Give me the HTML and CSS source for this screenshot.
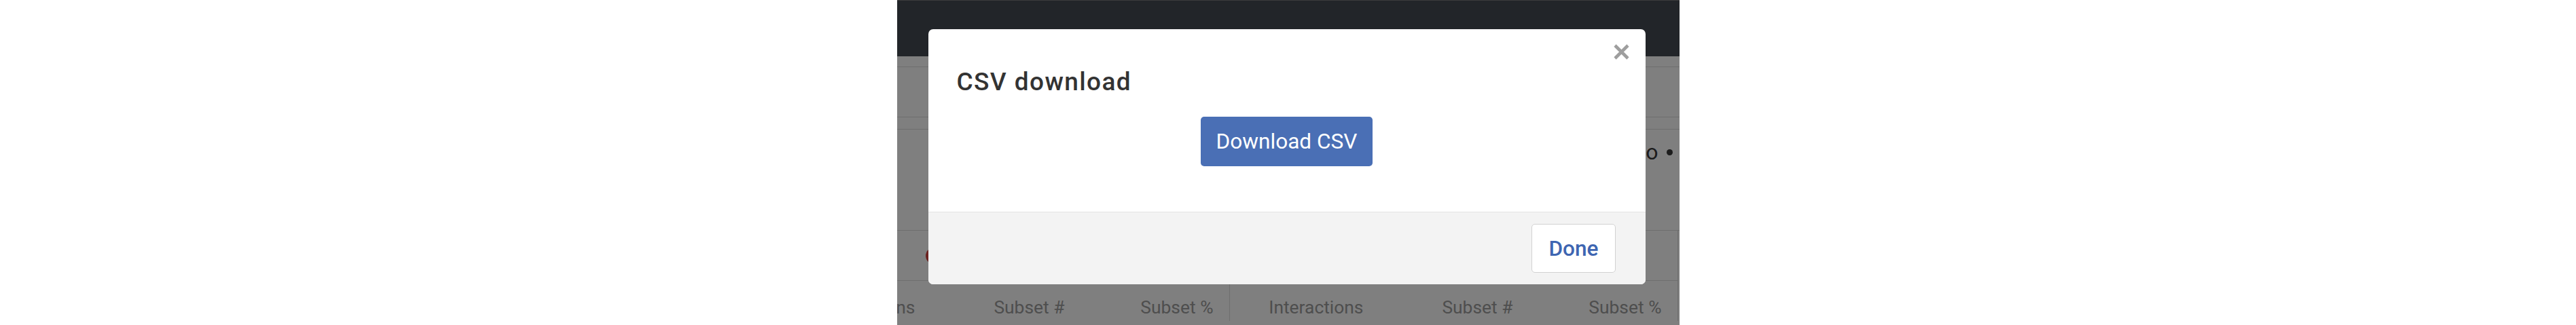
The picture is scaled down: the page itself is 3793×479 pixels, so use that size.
FILE: index.html
```html
<!DOCTYPE html>
<html lang="en">
<head>
    <meta charset="UTF-8">
    <meta name="viewport" content="width=device-width, initial-scale=1.0">
    <title>CSV download</title>
    <link rel="stylesheet" href="styles.css">
</head>
<body>

<div class="frame">
    <!-- Page behind the dialog -->
    <div class="page">
        <nav class="navbar"></nav>
        <div class="strip"></div>
        <div class="toolbar"></div>
        <div class="strip thin"></div>
        <div class="summary">
            <span class="legend">Demo</span>
            <span class="legend-dot"></span>
        </div>
        <div class="tables">
            <div class="group">
                <div class="group-head"><span class="badge"></span></div>
                <div class="cols">
                    <span>Interactions</span>
                    <span>Subset #</span>
                    <span>Subset %</span>
                </div>
            </div>
            <div class="group">
                <div class="group-head"></div>
                <div class="cols">
                    <span>Interactions</span>
                    <span>Subset #</span>
                    <span>Subset %</span>
                </div>
            </div>
        </div>
    </div>

    <div class="backdrop"></div>

    <!-- Dialog -->
    <div class="modal-wrap">
        <div class="modal">
            <button class="close" aria-label="Close">
                <svg width="23" height="23" viewBox="0 0 23 23">
                    <path d="M2 2 L21 21 M21 2 L2 21" stroke="#9e9e9e" stroke-width="4.6" fill="none"/>
                </svg>
            </button>
            <h4 class="modal-title">CSV download</h4>
            <div class="modal-body">
                <button class="btn btn-primary">Download CSV</button>
            </div>
            <div class="modal-footer">
                <button class="btn btn-default">Done</button>
            </div>
        </div>
    </div>
</div>

</body>
</html>
```

FILE: styles.css
```css
body {
    margin: 0;
    padding: 0;
    background-color: #fff;
    font-family: Roboto, "Noto Sans", sans-serif;
}
.frame {
    position: relative;
    width: 1152px;
    height: 479px;
    margin: 0 auto;
    overflow: hidden;
}
.page {
    background-color: #fff;
    height: 100%;
}
.navbar {
    height: 82px;
    border-top: 1px solid #787878;
    background-color: #444a53;
}
.strip {
    height: 15px;
    border-bottom: 1px solid #dddddd;
}
.toolbar {
    height: 73px;
    border-bottom: 1px solid #dddddd;
}
.strip.thin {
    height: 17px;
}
.summary {
    height: 134px;
    padding-top: 14px;
    padding-right: 10px;
    border-bottom: 1px solid #dddddd;
    display: flex;
    justify-content: flex-end;
    align-items: flex-start;
}
.legend {
    font-size: 32px;
    line-height: 38px;
    color: #383838;
    white-space: nowrap;
}
.legend-dot {
    width: 9px;
    height: 9px;
    margin: 15px 0 0 12px;
    border-radius: 50%;
    background-color: #383838;
}
.tables {
    display: flex;
    justify-content: flex-end;
    overflow: hidden;
    padding-right: 2px;
}
.group {
    flex-shrink: 0;
    width: 659px;
    border-right: 1px solid #dddddd;
}
.group-head {
    height: 73px;
    border-bottom: 1px solid #dddddd;
    display: flex;
    align-items: center;
    padding-left: 212px;
}
.badge {
    width: 24px;
    height: 24px;
    border-radius: 50%;
    background-color: #d64541;
}
.cols {
    display: grid;
    grid-template-columns: 220px 220px 219px;
    padding-top: 19px;
}
.cols span {
    text-align: right;
    padding-right: 23px;
    font-size: 26.4px;
    line-height: 40px;
    color: #9c9c9c;
}
.backdrop {
    position: absolute;
    top: 0;
    left: 0;
    right: 0;
    bottom: 0;
    background-color: rgba(0, 0, 0, 0.5);
}
.modal-wrap {
    position: absolute;
    top: 0;
    left: 0;
    right: 0;
    bottom: 0;
    padding: 43px 50px 0 46px;
}
.modal {
    position: relative;
    background-color: #fff;
    border-radius: 7px;
    overflow: hidden;
}
.close {
    position: absolute;
    top: 22px;
    right: 24px;
    padding: 0;
    border: none;
    background: none;
    line-height: 0;
    cursor: pointer;
}
.modal-title {
    margin: 0;
    padding: 56px 42px 0;
    font-size: 37px;
    font-weight: 500;
    letter-spacing: 1.4px;
    line-height: 44px;
    color: #333;
}
.modal-body {
    padding: 29px 42px 67px;
    text-align: center;
}
.btn {
    font-family: Roboto, "Noto Sans", sans-serif;
    font-size: 31.6px;
    line-height: 47px;
    border-radius: 5px;
    cursor: pointer;
}
.btn-primary {
    height: 73px;
    padding: 0 23px;
    border: none;
    background-color: #4a6fb5;
    color: #fff;
}
.modal-footer {
    display: flex;
    justify-content: flex-end;
    padding: 17px 44px;
    border-top: 1px solid #e3e3e3;
    background-color: #f3f3f3;
}
.btn-default {
    height: 72px;
    padding: 0 24px;
    border: 1px solid #d2d2d2;
    background-color: #fff;
    color: #3e65b1;
    font-weight: 500;
}
```
